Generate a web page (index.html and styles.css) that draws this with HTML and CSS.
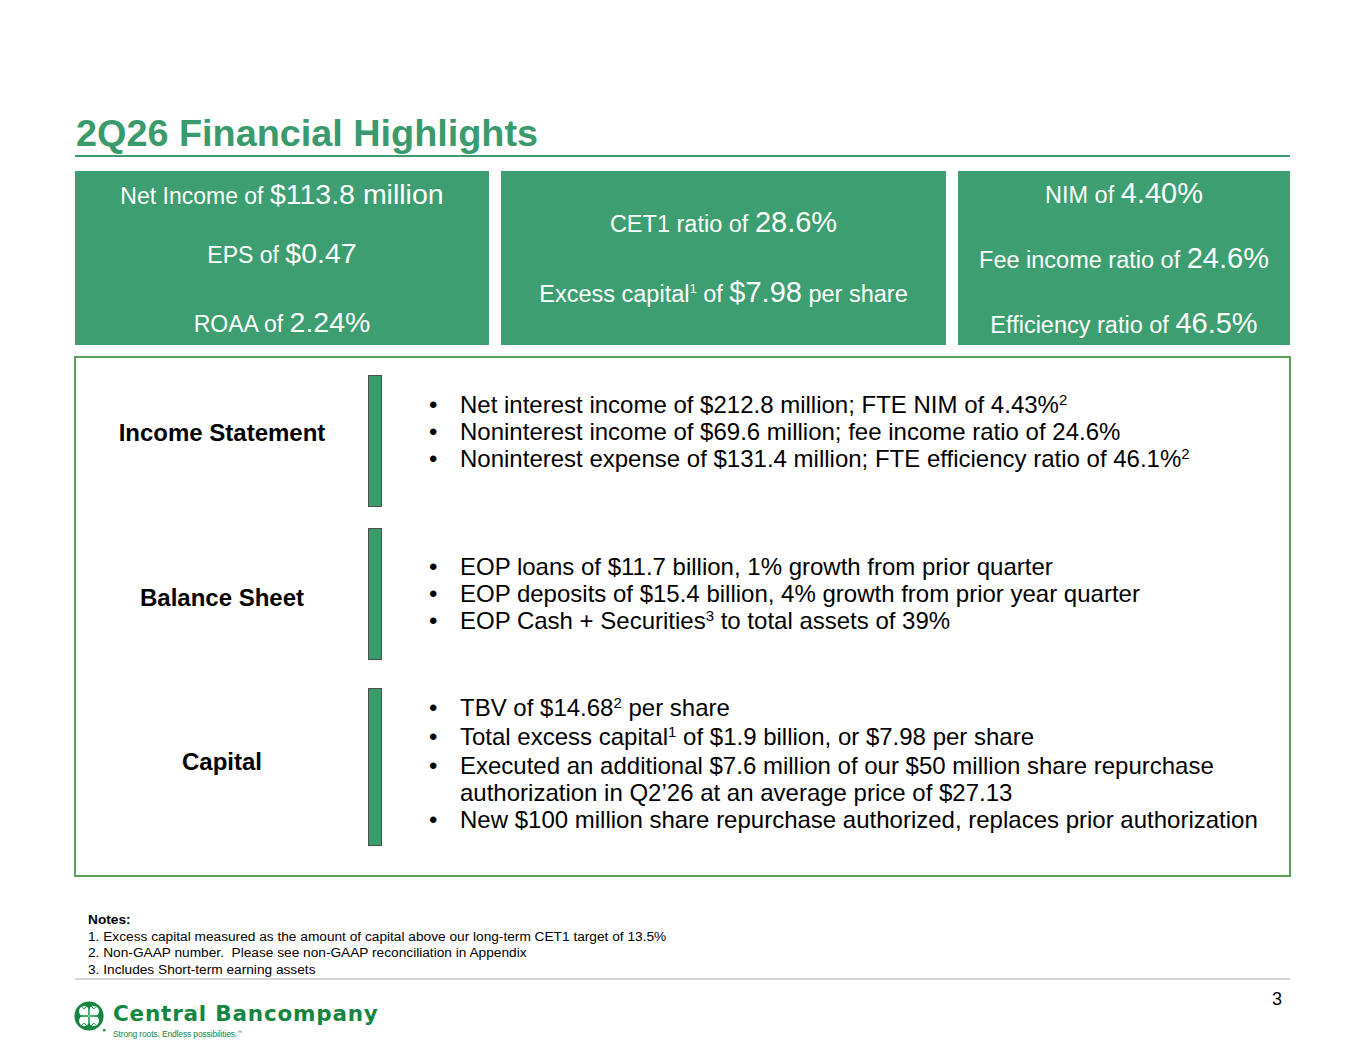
FILE: index.html
```html
<!DOCTYPE html>
<html lang="en">
<head>
<meta charset="utf-8">
<title>2Q26 Financial Highlights</title>
<link rel="stylesheet" href="styles.css">
</head>
<body>
<div class="slide">
  <header class="title-bar">
    <h1 class="title">2Q26 Financial Highlights</h1>
  </header>

  <section class="stats">
    <div class="stat stat-1">
      <p class="line">Net Income of <span class="big">$113.8 million</span></p>
      <p class="line">EPS of <span class="big">$0.47</span></p>
      <p class="line">ROAA of <span class="big">2.24%</span></p>
    </div>
    <div class="stat stat-2">
      <p class="line">CET1 ratio of <span class="big">28.6%</span></p>
      <p class="line">Excess capital<sup>1</sup> of <span class="big">$7.98</span> per share</p>
    </div>
    <div class="stat stat-3">
      <p class="line">NIM of <span class="big">4.40%</span></p>
      <p class="line">Fee income ratio of <span class="big">24.6%</span></p>
      <p class="line">Efficiency ratio of <span class="big">46.5%</span></p>
    </div>
  </section>

  <section class="detail">
    <div class="row row-income">
      <div class="label">Income Statement</div>
      <div class="bar"></div>
      <ul class="bullets">
        <li>Net interest income of $212.8 million; FTE NIM of 4.43%<sup>2</sup></li>
        <li>Noninterest income of $69.6 million; fee income ratio of 24.6%</li>
        <li>Noninterest expense of $131.4 million; FTE efficiency ratio of 46.1%<sup>2</sup></li>
      </ul>
    </div>
    <div class="row row-balance">
      <div class="label">Balance Sheet</div>
      <div class="bar"></div>
      <ul class="bullets">
        <li>EOP loans of $11.7 billion, 1% growth from prior quarter</li>
        <li>EOP deposits of $15.4 billion, 4% growth from prior year quarter</li>
        <li>EOP Cash + Securities<sup>3</sup> to total assets of 39%</li>
      </ul>
    </div>
    <div class="row row-capital">
      <div class="label">Capital</div>
      <div class="bar"></div>
      <ul class="bullets">
        <li>TBV of $14.68<sup>2</sup> per share</li>
        <li class="spaced">Total excess capital<sup>1</sup> of $1.9 billion, or $7.98 per share</li>
        <li class="spaced">Executed an additional $7.6 million of our $50 million share repurchase authorization in Q2’26 at an average price of $27.13</li>
        <li>New $100 million share repurchase authorized, replaces prior authorization</li>
      </ul>
    </div>
  </section>

  <section class="notes">
    <p class="notes-title">Notes:</p>
    <p>1. Excess capital measured as the amount of capital above our long-term CET1 target of 13.5%</p>
    <p>2. Non-GAAP number.&nbsp; Please see non-GAAP reconciliation in Appendix</p>
    <p>3. Includes Short-term earning assets</p>
  </section>
  <div class="rule"></div>

  <footer class="footer">
    <div class="logo">
      <svg class="logo-mark" width="32" height="32" viewBox="0 0 32 32" aria-hidden="true">
        <circle cx="15" cy="15" r="14.6" fill="#14863f"/>
        <g fill="#ffffff">
          <circle cx="10.2" cy="10.2" r="5.2"/>
          <circle cx="19.8" cy="10.2" r="5.2"/>
          <circle cx="10.2" cy="19.8" r="5.2"/>
          <circle cx="19.8" cy="19.8" r="5.2"/>
        </g>
        <path d="M15 6.5 V23.5 M6.5 15 H23.5" stroke="#14863f" stroke-width="1.4"/>
        <path d="M8 5.6 L10.2 8 L12.4 5.6 M8 24.4 L10.2 22 L12.4 24.4 M17.6 5.6 L19.8 8 L22 5.6 M17.6 24.4 L19.8 22 L22 24.4" stroke="#14863f" stroke-width="1" fill="none"/>
        <circle cx="15" cy="15" r="1.6" fill="#8fc79f"/>
        <circle cx="30.2" cy="29.2" r="1.3" fill="#14863f"/>
      </svg>
      <div class="brand">
        <div class="brand-name">Central Bancompany</div>
        <div class="brand-tag">Strong roots. Endless possibilities.<sup>™</sup></div>
      </div>
    </div>
    <div class="page-num">3</div>
  </footer>
</div>
</body>
</html>
```

FILE: styles.css
```css
html, body {
  margin: 0;
  padding: 0;
  background: #ffffff;
}

body {
  font-family: "Liberation Sans", Arial, sans-serif;
  color: #000000;
}

p {
  margin: 0;
}

.slide {
  width: 1365px;
  height: 1055px;
  box-sizing: border-box;
  padding: 0 74px;
  overflow: hidden;
}

/* Title */
.title-bar {
  margin: 0 1px;
  padding-top: 114px;
  padding-bottom: 3px;
  border-bottom: 2px solid #3d9b6f;
}

.title {
  margin: 0 0 0 1px;
  font-size: 37.8px;
  line-height: 38px;
  font-weight: bold;
  color: #3a9a6c;
}

/* Stat boxes */
.stats {
  display: grid;
  grid-template-columns: 414px 445px 332px;
  column-gap: 12px;
  margin: 14px 1px 0;
  height: 174px;
}

.stat {
  background: #3d9e71;
  color: #ffffff;
  display: flex;
  flex-direction: column;
  align-items: center;
  font-size: 23.5px;
  line-height: 30px;
  white-space: nowrap;
}

.stat .big {
  font-size: 29px;
}

.stat-1 {
  font-size: 23px;
}

.stat-1 .big {
  font-size: 28.5px;
}

.stat sup {
  font-size: 13px;
  line-height: 0;
  vertical-align: 9px;
}

.stat-1 {
  padding-top: 8px;
}
.stat-1 .line:nth-child(2) {
  margin-top: 27px;
}
.stat-1 .line:nth-child(3) {
  margin-top: 37px;
}

.stat-2 {
  padding-top: 36px;
}
.stat-2 .line:nth-child(2) {
  margin-top: 38px;
}

.stat-3 {
  padding-top: 7px;
}
.stat-3 .line:nth-child(2),
.stat-3 .line:nth-child(3) {
  margin-top: 33px;
}

/* Detail box */
.detail {
  margin-top: 11px;
  border: 2px solid #5a9e5c;
  padding: 17px 0 29px;
}

.row {
  display: grid;
  grid-template-columns: 292px 14px 1fr;
  align-items: start;
}

.row-balance {
  margin-top: 21px;
}

.row-capital {
  margin-top: 28px;
}

.label {
  text-align: center;
  font-size: 24px;
  line-height: 27px;
  font-weight: bold;
}

.bar {
  box-sizing: border-box;
  background: #3b9a6b;
  border: 1.5px solid #4a4f4c;
}

.row-income .bar { height: 132px; }
.row-balance .bar { height: 132px; }
.row-capital .bar { height: 158px; }

.row-income .label { margin-top: 43.5px; }
.row-balance .label { margin-top: 55.5px; }
.row-capital .label { margin-top: 59.5px; }

.bullets {
  list-style: none;
  margin: 0;
  padding: 0 0 0 47px;
  font-size: 24px;
  line-height: 27px;
}

.row-income .bullets { margin-top: 16px; }
.row-balance .bullets { margin-top: 25px; }
.row-capital .bullets { margin-top: 6px; }

.bullets li {
  padding-left: 31px;
  text-indent: -31px;
}

.bullets li::before {
  content: "•";
  display: inline-block;
  width: 31px;
  text-indent: 0;
}

.bullets li.spaced {
  margin-top: 2px;
}

.bullets sup {
  font-size: 15px;
  line-height: 0;
  vertical-align: 8px;
}

/* Notes */
.notes {
  margin-top: 35px;
  padding-left: 14px;
  font-size: 13.7px;
  line-height: 16.5px;
}

.notes-title {
  font-weight: bold;
}

.rule {
  margin: 0 1px;
  border-top: 2px solid #d4d4d4;
}

/* Footer */
.footer {
  display: flex;
  justify-content: space-between;
  align-items: flex-start;
  padding-top: 9px;
  margin-right: 9px;
}

.logo {
  display: flex;
  align-items: flex-start;
}

.logo-mark {
  display: block;
  margin-top: 12px;
}

.brand {
  margin-left: 7px;
  margin-top: 14px;
}

.brand-name {
  font-family: "DejaVu Sans", sans-serif;
  font-weight: bold;
  font-size: 21.5px;
  line-height: 21px;
  letter-spacing: 0.8px;
  color: #14863f;
}

.brand-tag {
  margin-top: 5px;
  font-family: "Liberation Sans", Arial, sans-serif;
  font-size: 8.5px;
  line-height: 10px;
  letter-spacing: -0.15px;
  color: #14863f;
}

.brand-tag sup {
  font-size: 5px;
  line-height: 0;
  vertical-align: 3px;
}

.page-num {
  font-size: 18px;
  line-height: 20px;
}
```
